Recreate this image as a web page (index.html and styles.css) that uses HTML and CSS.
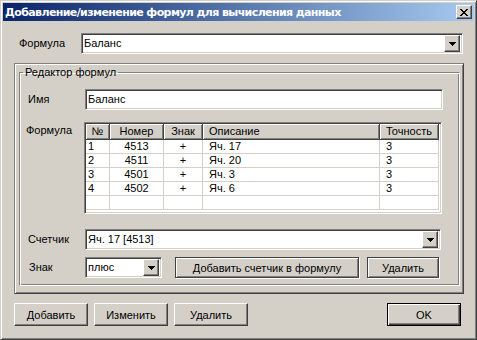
FILE: index.html
```html
<!DOCTYPE html>
<html lang="ru">
<head>
    <meta charset="UTF-8">
    <title>Добавление/изменение формул</title>
    <link rel="stylesheet" href="styles.css">
</head>
<body>
    <div class="window">
        <div class="titlebar">
            <span class="title">Добавление/изменение формул для вычисления данных</span>
            <span class="close-btn">
                <svg width="8" height="7" viewBox="0 0 8 7"><path d="M0 0h2v1H0zM6 0h2v1H6zM1 1h2v1H1zM5 1h2v1H5zM2 2h4v1H2zM3 3h2v1H3zM2 4h4v1H2zM1 5h2v1H1zM5 5h2v1H5zM0 6h2v1H0zM6 6h2v1H6z" fill="#000"/></svg>
            </span>
        </div>
        <div class="content">
            <div class="top-row">
                <span class="lbl lbl-top">Формула</span>
                <div class="combo combo-main">
                    <span class="combo-text">Баланс</span>
                    <span class="drop"><svg width="7" height="4" viewBox="0 0 7 4"><path d="M0 0h7v1H0zM1 1h5v1H1zM2 2h3v1H2zM3 3h1v1H3z" fill="#000"/></svg></span>
                </div>
            </div>

            <div class="panel">
                <fieldset class="group">
                    <legend>Редактор формул</legend>

                    <div class="row row-name">
                        <span class="lbl">Имя</span>
                        <div class="field field-name">Баланс</div>
                    </div>

                    <div class="row row-table">
                        <span class="lbl lbl-formula">Формула</span>
                        <div class="grid-box">
                            <table class="grid">
                                <colgroup>
                                    <col style="width:24px">
                                    <col style="width:54px">
                                    <col style="width:39px">
                                    <col style="width:177px">
                                    <col style="width:59px">
                                </colgroup>
                                <thead>
                                    <tr>
                                        <th class="c">№</th>
                                        <th class="c">Номер</th>
                                        <th class="c">Знак</th>
                                        <th>Описание</th>
                                        <th>Точность</th>
                                    </tr>
                                </thead>
                                <tbody>
                                    <tr><td class="num">1</td><td class="c">4513</td><td class="c">+</td><td>Яч. 17</td><td>3</td></tr>
                                    <tr><td class="num">2</td><td class="c">4511</td><td class="c">+</td><td>Яч. 20</td><td>3</td></tr>
                                    <tr><td class="num">3</td><td class="c">4501</td><td class="c">+</td><td>Яч. 3</td><td>3</td></tr>
                                    <tr><td class="num">4</td><td class="c">4502</td><td class="c">+</td><td>Яч. 6</td><td>3</td></tr>
                                    <tr><td class="num"></td><td></td><td></td><td></td><td></td></tr>
                                </tbody>
                            </table>
                        </div>
                    </div>

                    <div class="row row-counter">
                        <span class="lbl">Счетчик</span>
                        <div class="combo combo-counter">
                            <span class="combo-text">Яч. 17 [4513]</span>
                            <span class="drop"><svg width="7" height="4" viewBox="0 0 7 4"><path d="M0 0h7v1H0zM1 1h5v1H1zM2 2h3v1H2zM3 3h1v1H3z" fill="#000"/></svg></span>
                        </div>
                    </div>

                    <div class="row row-sign">
                        <span class="lbl lbl-sign">Знак</span>
                        <div class="combo combo-sign">
                            <span class="combo-text">плюс</span>
                            <span class="drop"><svg width="7" height="4" viewBox="0 0 7 4"><path d="M0 0h7v1H0zM1 1h5v1H1zM2 2h3v1H2zM3 3h1v1H3z" fill="#000"/></svg></span>
                        </div>
                        <button class="btn btn-framed btn-add-counter">Добавить счетчик в формулу</button>
                        <button class="btn btn-framed btn-remove-counter">Удалить</button>
                    </div>
                </fieldset>
            </div>

            <div class="buttons">
                <button class="btn">Добавить</button>
                <button class="btn">Изменить</button>
                <button class="btn">Удалить</button>
                <button class="btn btn-default">OK</button>
            </div>
        </div>
    </div>
</body>
</html>
```

FILE: styles.css
```css
* {
    box-sizing: border-box;
}
body {
    margin: 0;
    background: #d4d0c8;
    font-family: 'Liberation Sans', Arial, sans-serif;
    font-size: 11px;
    line-height: 13px;
    color: #000;
}
.window {
    width: 477px;
    height: 340px;
    padding: 2px;
    background: #d4d0c8;
    border: 1px solid;
    border-color: #d4d0c8 #404040 #404040 #d4d0c8;
    box-shadow: inset 1px 1px #fff, inset -1px -1px #808080;
}
.titlebar {
    height: 18px;
    display: flex;
    align-items: center;
    justify-content: space-between;
    padding: 0 2px 0 2px;
    background: linear-gradient(to right, #0a246a, #a6caf0);
}
.title {
    color: #fff;
    font-family: 'DejaVu Sans', sans-serif;
    font-weight: bold;
    font-size: 11px;
    letter-spacing: -0.6px;
}
.close-btn {
    width: 16px;
    height: 14px;
    display: flex;
    align-items: center;
    justify-content: center;
    background: #d4d0c8;
    border: 1px solid;
    border-color: #fff #404040 #404040 #fff;
    box-shadow: inset -1px -1px #808080;
}

/* raised look */
.drop, .btn {
    background: #d4d0c8;
    border: 1px solid;
    border-color: #fff #404040 #404040 #fff;
    box-shadow: inset -1px -1px #808080;
}

.top-row {
    display: flex;
    align-items: center;
    margin-top: 12px;
    padding-left: 16px;
}
.lbl-top {
    width: 62px;
}
.combo, .field {
    height: 21px;
    background: #fff;
    border: 1px solid;
    border-color: #808080 #fff #fff #808080;
    box-shadow: inset 1px 1px #404040, inset -1px -1px #d4d0c8;
    display: flex;
    align-items: center;
    padding: 2px;
}
.combo-text {
    flex: 1;
}
.drop {
    width: 16px;
    height: 17px;
    display: flex;
    align-items: center;
    justify-content: center;
}
.combo-main {
    width: 382px;
}

.panel {
    margin: 9px 0 0 11px;
    width: 450px;
    height: 231px;
    padding: 1px 3px 0 4px;
    border: 1px solid;
    border-color: #808080 #404040 #404040 #808080;
    box-shadow: inset 1px 1px #fff, inset -1px -1px #808080;
}
.group {
    margin: 0;
    padding: 10px 0 0 0;
    min-width: 0;
    height: 221px;
    border: 1px solid;
    border-color: #808080 #fff #fff #808080;
    box-shadow: inset 1px 1px #fff, inset -1px -1px #808080;
}
.group legend {
    margin-left: 3px;
    padding: 0 2px;
    line-height: 14px;
}

.row {
    display: flex;
    align-items: center;
}
.row .lbl {
    width: 65px;
    padding-left: 8px;
}
.field-name {
    width: 358px;
}
.row-table {
    margin-top: 12px;
    align-items: flex-start;
}
.lbl-formula {
    padding-left: 6px !important;
    margin-right: -1px;
    margin-top: 2px;
}
.grid-box {
    width: 358px;
    height: 92px;
    background: #fff;
    border: 1px solid;
    border-color: #808080 #fff #fff #808080;
    box-shadow: inset 1px 1px #404040, inset -1px -1px #d4d0c8;
    padding: 1px;
    overflow: hidden;
}
.grid {
    table-layout: fixed;
    border-collapse: separate;
    border-spacing: 0;
    width: 353px;
}
.grid th {
    height: 16px;
    padding: 0 0 0 6px;
    font-weight: normal;
    text-align: left;
    background: #d4d0c8;
    border-right: 1px solid #404040;
    border-bottom: 1px solid #404040;
    box-shadow: inset 1px 1px #fff, inset -1px -1px #808080;
    white-space: nowrap;
}
.grid td {
    height: 14px;
    padding: 0 0 0 6px;
    border-right: 1px solid #d4d0c8;
    border-bottom: 1px solid #d4d0c8;
    white-space: nowrap;
}
.grid td.num {
    padding-left: 2px;
}
.grid .c {
    text-align: center;
    padding: 0;
}

.row-counter {
    margin-top: 15px;
}
.combo-counter {
    width: 356px;
}
.row-sign {
    margin-top: 7px;
}
.lbl-sign {
    padding-left: 9px !important;
}
.combo-sign {
    width: 77px;
}

.btn {
    font-family: 'Liberation Sans', Arial, sans-serif;
    font-size: 11px;
    color: #000;
    height: 23px;
    width: 74px;
    padding: 0;
}
.btn-framed {
    height: 21px;
    border: 1px solid #404040;
    box-shadow: inset 1px 1px #fff, inset -1px -1px #808080, 1px 1px #fff;
}
.btn-add-counter {
    width: 184px;
    margin-left: 13px;
}
.btn-remove-counter {
    width: 72px;
    margin-left: 8px;
}

.buttons {
    display: flex;
    gap: 6px;
    margin: 9px 0 0 11px;
    width: 447px;
}
.btn-default {
    margin-left: auto;
    border: 1px solid #000;
    box-shadow: inset 1px 1px #fff, inset -1px -1px #404040, inset -2px -2px #808080;
}
```
